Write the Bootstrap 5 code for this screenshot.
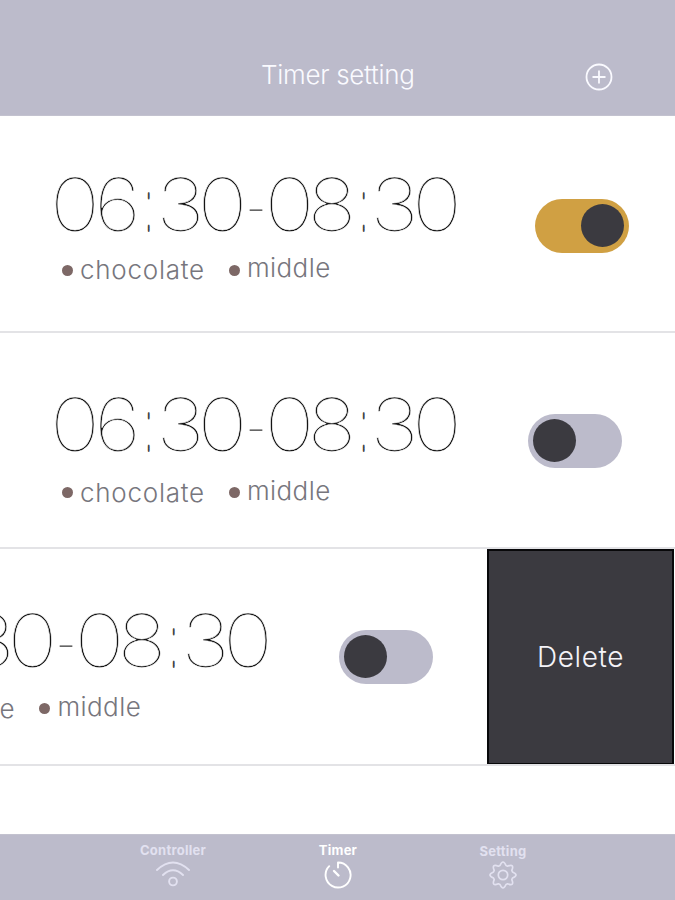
<!DOCTYPE html>
<html lang="en">
<head>
<meta charset="utf-8">
<meta name="viewport" content="width=device-width, initial-scale=1">
<title>Timer setting</title>
<link href="https://cdn.jsdelivr.net/npm/bootstrap@5.3.0/dist/css/bootstrap.min.css" rel="stylesheet">
<style>
  body { font-family: Inter, "Liberation Sans", sans-serif; width: 675px; height: 900px; overflow: hidden; background: #fff; }
  .topbar { height: 116px; background: #bcbbcb; padding: 56px 62px 0 0; border-bottom: 1px solid #c3c2cf; }
  .topbar h1 { font-size: 26px; font-weight: 300; line-height: 38px; color: #fafaff; letter-spacing: -.3px; margin-left: 261px; }
  .add-btn { margin-top: 7px; color: #fafaff; }
  .timer-row { height: 216.5px; border-bottom: 2px solid #e3e3e6; }
  .timer-face { width: 675px; padding-left: 53px; }
  .timer-info { width: 410px; padding-top: 62px; }
  .timer-row:first-child .timer-info { padding-top: 59px; }
  .swiped .timer-face { margin-left: -189.5px; }
  .clock { font-size: 73px; font-weight: 100; line-height: 60px; height: 60px; color: #151515; -webkit-text-stroke: .5px #fff; }
  .clock span { display: flex; justify-content: center; width: 41px; transform: scaleX(1.14); }
  .clock .zero { width: 43px; transform: scaleX(1.17); }
  .clock .edge { width: 44px; }
  .clock .eight { width: 42px; transform: scaleX(1.12); }
  .clock .colon { width: 21.5px; transform: scale(.45, .95); -webkit-text-stroke: 0; color: #444; text-shadow: 0 2px #444, 0 -2px #444; }
  .clock .dash { width: 24px; transform: translateY(2px) scaleX(.64); color: #666; -webkit-text-stroke: 0; }
  .tags { font-size: 26px; font-weight: 300; line-height: 30px; color: #77767d; padding-top: 23px; }
  .timer-row:first-child .tags { padding-top: 20px; }
  .bullet { width: 11px; height: 11px; border-radius: 50%; background: #7d6866; margin: 9px 7.5px 0 8.5px; }
  .timer-row:first-child .bullet { margin-top: 10px; }
  .tag-a { width: 140px; letter-spacing: .75px; }
  .tag-b { margin-top: -2px; letter-spacing: .4px; }
  .switch { width: 94px; height: 54px; border-radius: 27px; background: #bcbbcb; padding: 5px; margin: 81px 0 0 65px; }
  .switch i { width: 43px; height: 43px; border-radius: 50%; background: #3b3a40; }
  .switch.on { background: #d0a043; margin: 82.5px 0 0 72px; }
  .delete-btn { width: 187px; height: 216px; background: #3b3a40; border: 2px solid #08080a; border-radius: 0; color: #f4f3f8; font-size: 28px; font-weight: 300; letter-spacing: .6px; margin-left: 1.5px; padding: 0; }
  .tabbar { height: 66px; background: #bcbbcb; border-top: 1px solid #c3c2cf; font-size: 13px; font-weight: 700; padding-left: 1px; }
  .tab { width: 165px; color: #e2e1f0; line-height: 16px; letter-spacing: .25px; padding-top: 7px; }
  .tab.current { color: #fff; }
  .tab:last-child { padding-top: 8px; }
  .tab svg { margin-top: 2px; }
  svg { fill: none; stroke: currentColor; display: block; }
</style>
<script src="https://cdn.jsdelivr.net/npm/bootstrap@5.3.0/dist/js/bootstrap.bundle.min.js"></script>
</head>
<body class="d-flex flex-column">
<header class="topbar d-flex justify-content-between align-items-start flex-shrink-0">
  <h1 class="mb-0">Timer setting</h1>
  <a href="#" class="add-btn" aria-label="Add"><svg width="28" height="28" stroke-width="1.8"><circle cx="14" cy="14" r="12.5"/><path d="M14 7.5v13M7.500 14h13"/></svg></a>
</header>
<main class="flex-grow-1">
  <section class="timer-row d-flex">
    <div class="timer-face d-flex flex-shrink-0">
      <div class="timer-info">
        <div class="clock d-flex"><span class="zero edge">0</span><span>6</span><span class="colon">:</span><span>3</span><span class="zero">0</span><span class="dash">-</span><span class="zero">0</span><span class="eight">8</span><span class="colon">:</span><span>3</span><span class="zero edge">0</span></div>
        <div class="tags d-flex"><b class="bullet"></b><span class="tag-a">chocolate</span><b class="bullet"></b><span class="tag-b">middle</span></div>
      </div>
      <div class="switch on d-flex justify-content-end"><i></i></div>
    </div>
  </section>
  <section class="timer-row d-flex">
    <div class="timer-face d-flex flex-shrink-0">
      <div class="timer-info">
        <div class="clock d-flex"><span class="zero edge">0</span><span>6</span><span class="colon">:</span><span>3</span><span class="zero">0</span><span class="dash">-</span><span class="zero">0</span><span class="eight">8</span><span class="colon">:</span><span>3</span><span class="zero edge">0</span></div>
        <div class="tags d-flex"><b class="bullet"></b><span class="tag-a">chocolate</span><b class="bullet"></b><span class="tag-b">middle</span></div>
      </div>
      <div class="switch d-flex"><i></i></div>
    </div>
  </section>
  <section class="timer-row swiped d-flex overflow-hidden">
    <div class="timer-face d-flex flex-shrink-0">
      <div class="timer-info">
        <div class="clock d-flex"><span class="zero edge">0</span><span>6</span><span class="colon">:</span><span>3</span><span class="zero">0</span><span class="dash">-</span><span class="zero">0</span><span class="eight">8</span><span class="colon">:</span><span>3</span><span class="zero edge">0</span></div>
        <div class="tags d-flex"><b class="bullet"></b><span class="tag-a">chocolate</span><b class="bullet"></b><span class="tag-b">middle</span></div>
      </div>
      <div class="switch d-flex"><i></i></div>
    </div>
    <button class="btn delete-btn flex-shrink-0">Delete</button>
  </section>
</main>
<nav class="tabbar d-flex justify-content-center flex-shrink-0">
  <a class="tab d-flex flex-column align-items-center text-decoration-none">Controller
    <svg width="36" height="28" stroke-width="1.9" stroke-linecap="round"><path d="M2 10Q18-5 34 10M8 15Q18 5.500 28 15"/><circle cx="18" cy="21.500" r="3.900"/></svg></a>
  <a class="tab current d-flex flex-column align-items-center text-decoration-none">Timer
    <svg width="28" height="30" stroke-width="1.9" stroke-linecap="round" stroke-linejoin="round"><path d="M14 7.500V2.500A12.500 12.500 0 1 1 5.200 6.200"/><path stroke-width="2.400" d="M10 11l4.500 4.500"/></svg></a>
  <a class="tab d-flex flex-column align-items-center text-decoration-none">Setting
    <svg width="28" height="28" viewBox="-14 -14 28 28" stroke-width="1.7" stroke-linejoin="round"><circle r="4.700"/><path d="M-3-9.500Q-1.500-13 0-13Q1.500-13 3-9.500L4.600-8.800Q8.100-10.300 9.200-9.200Q10.300-8.100 8.800-4.600L9.500-3Q13-1.500 13 0Q13 1.500 9.500 3L8.800 4.600Q10.300 8.100 9.200 9.200Q8.100 10.300 4.600 8.800L3 9.500Q1.500 13 0 13Q-1.500 13-3 9.500L-4.600 8.800Q-8.100 10.300-9.200 9.200Q-10.300 8.100-8.800 4.600L-9.500 3Q-13 1.500-13 0Q-13-1.500-9.500-3L-8.800-4.600Q-10.300-8.100-9.200-9.200Q-8.100-10.300-4.600-8.800Z"/></svg></a>
</nav>
</body>
</html>
